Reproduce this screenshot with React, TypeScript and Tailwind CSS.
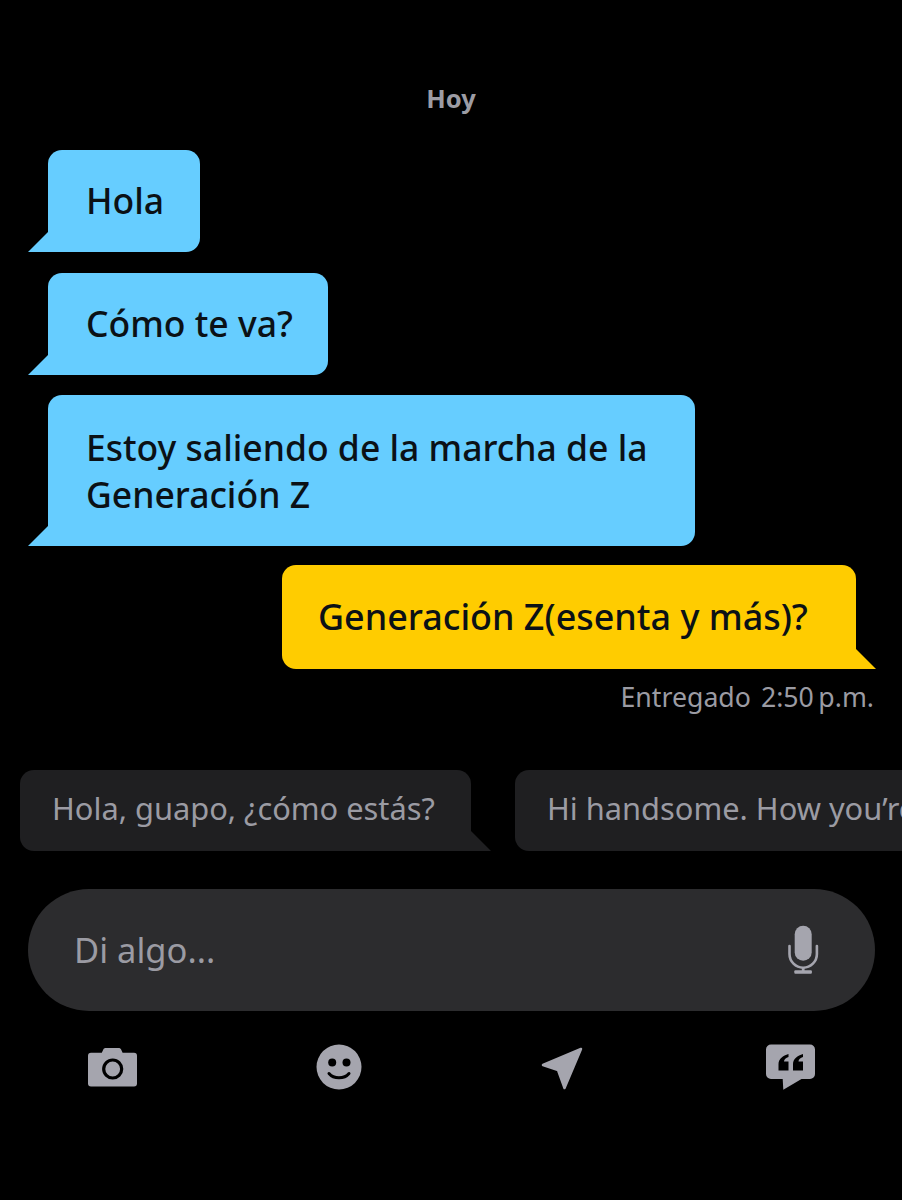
const sans = "font-['Noto_Sans',sans-serif]";

function Tail({ side, color }: { side: "left" | "right"; color: string }) {
  return (
    <svg
      viewBox="0 0 21 21"
      className={`absolute bottom-0 h-[21px] w-[21px] ${side === "left" ? "left-[-20px]" : "right-[-20px]"} ${color}`}
    >
      <polygon points={side === "left" ? "21,0 21,21 0,21" : "0,0 0,21 21,21"} fill="currentColor" />
    </svg>
  );
}

function Incoming({ className, children }: { className: string; children: React.ReactNode }) {
  return (
    <div className={`relative ml-12 rounded-[14px] rounded-bl-none bg-[#66cdff] pb-[27px] pl-[38px] pt-[26px] text-[35.5px] font-medium leading-[49px] text-[#0b1116] ${className}`}>
      {children}
      <Tail side="left" color="text-[#66cdff]" />
    </div>
  );
}

function Suggestion({ className, children, tail }: { className: string; children: React.ReactNode; tail?: boolean }) {
  return (
    <div className={`relative h-[81px] shrink-0 whitespace-nowrap rounded-[14px] rounded-br-none bg-[#1f1f21] pl-8 text-[30.8px] leading-[77px] text-[#9b9ba3] ${className}`}>
      {children}
      {tail && <Tail side="right" color="text-[#1f1f21]" />}
    </div>
  );
}

export default function App() {
  return (
    <div className={`h-[1200px] w-[902px] overflow-hidden bg-black ${sans}`}>
      <div className="pb-[36px] pt-[83px] text-center text-[25.5px] font-bold leading-[31px] text-[#9c9ca4]">Hoy</div>

      <div className="flex flex-col items-start">
        <Incoming className="mb-[21px] w-[152px]">Hola</Incoming>
        <Incoming className="mb-5 w-[280px]">Cómo te va?</Incoming>
        <Incoming className="mb-[19px] w-[647px]">
          <span className="relative top-[2px]">Estoy saliendo de la marcha de la</span>
          <br />
          Generación Z
        </Incoming>
      </div>

      <div className="relative ml-[282px] h-[104px] w-[574px] rounded-[14px] rounded-br-none bg-[#ffcc00] pl-[36px] text-[35.9px] font-medium leading-[103px] text-[#0b1116]">
        Generación Z(esenta y más)?
        <Tail side="right" color="text-[#ffcc00]" />
      </div>

      <div className="mr-7 mt-[12px] flex justify-end gap-[10px] text-[26.7px] leading-[32px] text-[#9b9ba3]">
        <span>Entregado</span>
        <span>2:50{"\u2009"}p.m.</span>
      </div>

      <div className="ml-5 mt-[57px] flex gap-[44px]">
        <Suggestion className="w-[451px]" tail>
          Hola, guapo, ¿cómo estás?
        </Suggestion>
        <Suggestion className="w-[500px]">Hi handsome. How you’re</Suggestion>
      </div>

      <div className="ml-7 mr-[27px] mt-[38px] flex h-[122px] items-center justify-between rounded-[61px] bg-[#2c2c2e] pl-[46px] pr-[55px]">
        <span className="text-[34.5px] text-[#9b9ba3]">Di algo...</span>
        <svg viewBox="0 0 34 52" className="h-[52px] w-[34px] text-[#a5a5ae]">
          <rect x="8.7" y="1.7" width="17" height="35" rx="8.5" fill="currentColor" />
          <path d="M3.5 22v8a13.7 13.7 0 0 0 27.4 0v-8" fill="none" stroke="currentColor" strokeWidth="2.6" strokeLinecap="round" />
          <path d="M17.2 43.5V48" stroke="currentColor" strokeWidth="2.8" />
          <rect x="8.3" y="46.2" width="17.6" height="3.6" rx="1" fill="currentColor" />
        </svg>
      </div>

      <div className="ml-[88px] mt-[33px] flex items-start gap-[176px] text-[#a5a5ae]">
        <svg viewBox="0 0 50 46" className="h-[46px] w-[50px]">
          <path d="M3 8.7h10.8l1.5-3.2c.5-1 1.3-1.5 2.4-1.5h13c1.100 0 1.900.5 2.400 1.500l1.500 3.200H46a3 3 0 0 1 3 3V39.500a3 3 0 0 1-3 3H3a3 3 0 0 1-3-3V11.700a3 3 0 0 1 3-3z" fill="currentColor" />
          <circle cx="24.700" cy="25" r="9" fill="none" stroke="#000" strokeWidth="3.200" />
        </svg>
        <svg viewBox="0 0 50 46" className="h-[46px] w-[50px]">
          <circle cx="25" cy="23" r="22.500" fill="currentColor" />
          <circle cx="18.200" cy="18.600" r="4" fill="#000" />
          <circle cx="32.500" cy="18.600" r="4" fill="#000" />
          <path d="M15 29.500c2.500 3 6 4.300 10 4.300s7.500-1.300 10-4.300" fill="none" stroke="#000" strokeWidth="3" strokeLinecap="round" />
        </svg>
        <svg viewBox="0 0 50 46" className="h-[46px] w-[50px]">
          <polygon points="41,5 3,21 18,26 24.500,44" fill="currentColor" stroke="currentColor" strokeWidth="2.500" strokeLinejoin="round" />
        </svg>
        <svg viewBox="0 0 50 46" className="h-[46px] w-[50px]">
          <path d="M5 0.500h39a5 5 0 0 1 5 5V30a5 5 0 0 1-5 5H35.500l-18.200 10.700L16.700 35H5a5 5 0 0 1-5-5V5.500a5 5 0 0 1 5-5z" fill="currentColor" />
          <path d="M22.500 10C17 11.500 12.500 15 12.500 20v6.500h10v-9H18c0-2.500 2-3.500 4.500-4.500z" fill="#000" />
          <path d="M37 10c-5.500 1.500-10 5-10 10v6.500h10v-9h-4.500c0-2.500 2-3.500 4.500-4.500z" fill="#000" />
        </svg>
      </div>
    </div>
  );
}
